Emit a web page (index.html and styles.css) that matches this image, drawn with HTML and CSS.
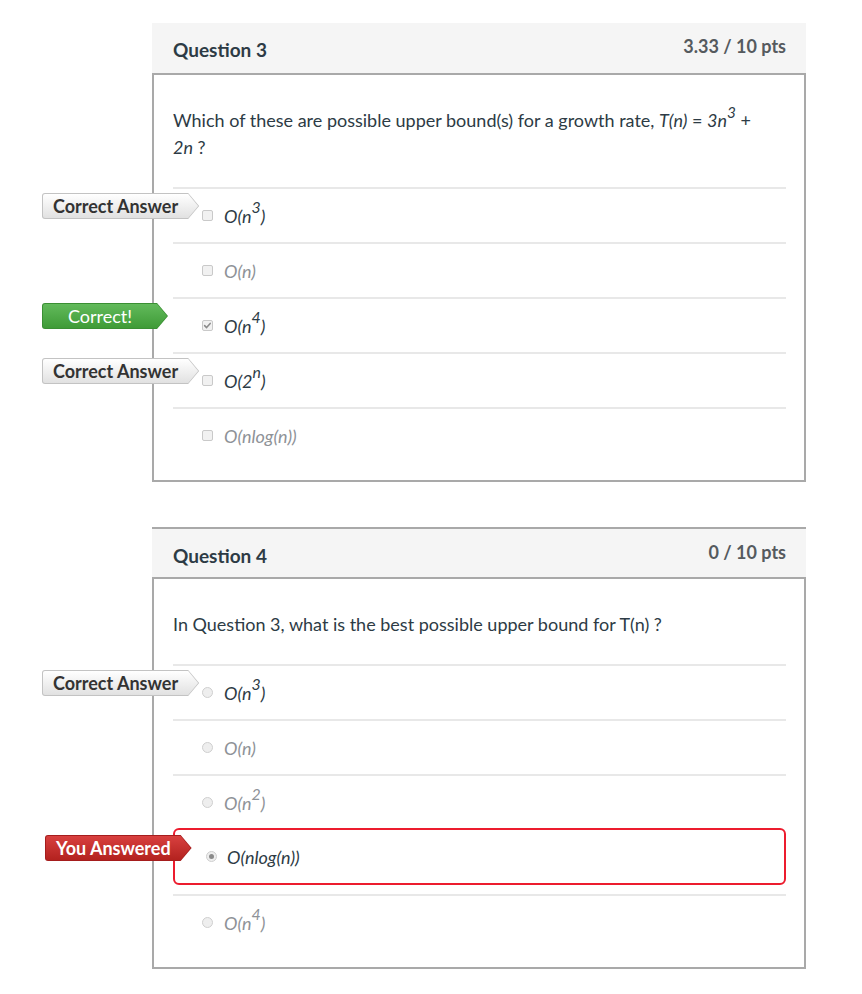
FILE: index.html
```html
<!DOCTYPE html>
<html lang="en">
<head>
<meta charset="utf-8">
<title>Quiz results</title>
<link rel="stylesheet" href="styles.css">
</head>
<body>
<div class="quiz">

  <div class="question">
    <div class="q-header">
      <span class="q-title">Question 3</span>
      <span class="q-points">3.33 / 10 pts</span>
    </div>
    <div class="q-body">
      <p class="q-text">Which of these are possible upper bound(s) for a growth rate, <i>T(n)</i> = <i>3n<sup>3</sup></i> +<br><i>2n</i> ?</p>
      <div class="answers">
        <div class="answer">
          <span class="tag tag-gray"><span class="tag-face">Correct Answer</span></span>
          <span class="cb"></span>
          <span class="atext dark">O(n<sup>3</sup>)</span>
        </div>
        <div class="answer">
          <span class="cb"></span>
          <span class="atext">O(n)</span>
        </div>
        <div class="answer">
          <span class="tag tag-green"><span class="tag-face">Correct!</span></span>
          <span class="cb checked"><svg viewBox="0 0 11 11" width="11" height="11"><path d="M2.6 5.6 L4.6 7.6 L8.2 3.4" fill="none" stroke="#8a8a8a" stroke-width="1.5" stroke-linecap="round" stroke-linejoin="round"/></svg></span>
          <span class="atext dark">O(n<sup>4</sup>)</span>
        </div>
        <div class="answer">
          <span class="tag tag-gray"><span class="tag-face">Correct Answer</span></span>
          <span class="cb"></span>
          <span class="atext dark">O(2<sup>n</sup>)</span>
        </div>
        <div class="answer">
          <span class="cb"></span>
          <span class="atext">O(nlog(n))</span>
        </div>
      </div>
    </div>
  </div>

  <div class="question framed">
    <div class="q-header">
      <span class="q-title">Question 4</span>
      <span class="q-points">0 / 10 pts</span>
    </div>
    <div class="q-body">
      <p class="q-text">In Question 3, what is the best possible upper bound for T(n) ?</p>
      <div class="answers">
        <div class="answer">
          <span class="tag tag-gray"><span class="tag-face">Correct Answer</span></span>
          <span class="rb"></span>
          <span class="atext dark">O(n<sup>3</sup>)</span>
        </div>
        <div class="answer">
          <span class="rb"></span>
          <span class="atext">O(n)</span>
        </div>
        <div class="answer">
          <span class="rb"></span>
          <span class="atext">O(n<sup>2</sup>)</span>
        </div>
        <div class="answer wrong">
          <span class="tag tag-red"><span class="tag-face">You Answered</span></span>
          <span class="rb selected"></span>
          <span class="atext dark">O(nlog(n))</span>
        </div>
        <div class="answer">
          <span class="rb"></span>
          <span class="atext">O(n<sup>4</sup>)</span>
        </div>
      </div>
    </div>
  </div>

</div>
</body>
</html>
```

FILE: styles.css
```css
html, body {
  margin: 0;
  padding: 0;
  background: #ffffff;
}

body {
  font-family: Lato, "Open Sans", "Liberation Sans", sans-serif;
  color: #2d3b45;
}

.quiz {
  width: 654px;
  margin-left: 152px;
  padding-top: 23px;
}

.question {
  margin-bottom: 45px;
}

.q-header {
  box-sizing: border-box;
  height: 52px;
  padding: 14px 20px 0 21px;
  background: #f5f5f5;
  border-bottom: 2px solid #a9a9a9;
  display: flex;
  justify-content: space-between;
  align-items: flex-start;
}

.framed .q-header {
  border-top: 2px solid #a9a9a9;
}

.q-title {
  font-size: 19px;
  font-weight: 700;
  line-height: 26px;
  color: #2d3b45;
}

.q-points {
  font-size: 18px;
  font-weight: 700;
  line-height: 18px;
  color: #555a5e;
}

.q-body {
  border: 2px solid #a9a9a9;
  border-top: 0;
  padding: 32px 18px 18px 19px;
}

.q-text {
  margin: 0 0 26px;
  font-size: 18px;
  line-height: 27px;
  color: #2d3b45;
}

.q-text sup {
  font-size: 85%;
  line-height: 0;
  vertical-align: 0.6em;
}

.atext sup {
  font-size: 88%;
  line-height: 0;
  vertical-align: 0.62em;
}

.answers {
  display: flex;
  flex-direction: column;
}

.answer {
  position: relative;
  box-sizing: border-box;
  height: 55px;
  border-top: 2px solid #e8e8e8;
  display: flex;
  align-items: center;
  gap: 11px;
  padding-left: 29px;
}

.answer.wrong {
  height: 57px;
  margin: -1px 0 9px;
  border: 2px solid #ec1c2e;
  border-radius: 6px;
  padding-left: 31px;
  gap: 10px;
}

.atext {
  font-size: 18px;
  font-style: italic;
  color: #8e9297;
}

.atext.dark {
  color: #2d3b45;
}

.cb {
  box-sizing: border-box;
  width: 11px;
  height: 11px;
  border: 1px solid #c9c9c9;
  border-radius: 2px;
  background: #f1f1f1;
  flex: none;
  position: relative;
}

.cb svg {
  position: absolute;
  left: -1px;
  top: -1px;
}

.rb {
  box-sizing: border-box;
  width: 11px;
  height: 11px;
  border: 1px solid #cfcfcf;
  border-radius: 50%;
  background: #eeeeee;
  flex: none;
  display: flex;
  align-items: center;
  justify-content: center;
}

.rb.selected::after {
  content: "";
  width: 5px;
  height: 5px;
  border-radius: 50%;
  background: #8a8a8a;
}

/* result tags that sit over the card's left edge */
.tag {
  position: absolute;
  left: -131px;
  top: 4px;
  padding: 1px;
  border-radius: 3px 0 0 3px;
  clip-path: polygon(0 0, calc(100% - 11px) 0, 100% 50%, calc(100% - 11px) 100%, 0 100%);
}

.wrong .tag {
  left: -130px;
  top: 5px;
}

.tag-face {
  display: block;
  box-sizing: border-box;
  min-width: 124px;
  height: 24px;
  padding: 0 20px 0 10px;
  border-radius: 2px 0 0 2px;
  line-height: 24px;
  font-size: 18px;
  text-align: center;
  white-space: nowrap;
  clip-path: polygon(0 0, calc(100% - 10px) 0, 100% 50%, calc(100% - 10px) 100%, 0 100%);
}

.tag-gray {
  background: #c3c3c3;
}

.tag-gray .tag-face {
  background: linear-gradient(#ffffff, #e1e1e1);
  color: #333333;
  font-weight: 700;
}

.tag-green {
  background: #3a8f33;
}

.tag-green .tag-face {
  background: linear-gradient(#62ba5b, #3f9b37);
  color: #ffffff;
  font-weight: 400;
}

.tag-red {
  background: #a51d1d;
}

.tag-red .tag-face {
  background: linear-gradient(#d8403f, #b3221f);
  color: #ffffff;
  font-weight: 700;
}
```
